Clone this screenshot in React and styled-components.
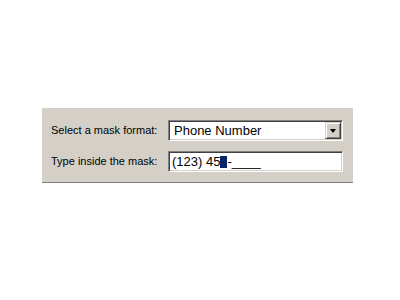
import React from 'react'
import styled, { createGlobalStyle } from 'styled-components'

const GlobalStyle = createGlobalStyle`
  html, body {
    margin: 0;
    padding: 0;
    background: #ffffff;
  }
  body {
    font-family: "Liberation Sans", Arial, sans-serif;
  }
`

const Page = styled.div`
  width: 400px;
  height: 300px;
  padding: 108px 0 0 42px;
  box-sizing: border-box;
`

const Panel = styled.div`
  width: 311px;
  box-sizing: border-box;
  background: #d4d0c8;
  border-bottom: 1px solid #808080;
  padding: 12px 10px 10px 9px;
  display: grid;
  grid-template-columns: 117px 175px;
  row-gap: 10px;
  align-items: center;
`

const Label = styled.label`
  font-size: 11px;
  color: #000000;
  line-height: 13px;
  white-space: nowrap;
`

const Sunken = styled.div`
  height: 21px;
  box-sizing: border-box;
  background: #ffffff;
  border: 1px solid;
  border-color: #808080 #ffffff #ffffff #808080;
  box-shadow: inset 1px 1px #404040, inset -1px -1px #d4d0c8;
  padding: 1px;
  display: flex;
  align-items: center;
  font-size: 13px;
  color: #000000;
  white-space: nowrap;
`

const ComboText = styled.span`
  flex: 1;
  padding-left: 4px;
  line-height: 17px;
`

const DropButton = styled.span`
  width: 16px;
  height: 17px;
  box-sizing: border-box;
  background: #d4d0c8;
  border: 1px solid;
  border-color: #d4d0c8 #404040 #404040 #d4d0c8;
  box-shadow: inset 1px 1px #ffffff, inset -1px -1px #808080;
  display: flex;
  align-items: center;
  justify-content: center;
`

const Arrow = styled.span`
  width: 0;
  height: 0;
  border-left: 3.5px solid transparent;
  border-right: 3.5px solid transparent;
  border-top: 4px solid #000000;
  margin-top: 1px;
`

const MaskText = styled.span`
  padding-left: 2px;
  line-height: 17px;
`

// the highlighted placeholder slot where the caret sits
const Selected = styled.span`
  display: inline-block;
  width: 7px;
  height: 12px;
  background: #0a246a;
  vertical-align: -2px;
`

export default function App() {
  return (
    <>
      <GlobalStyle />
      <Page>
        <Panel>
          <Label>Select a mask format:</Label>
          <Sunken>
            <ComboText>Phone Number</ComboText>
            <DropButton>
              <Arrow />
            </DropButton>
          </Sunken>
          <Label>Type inside the mask:</Label>
          <Sunken>
            <MaskText>
              (123) 45<Selected aria-label="_" />-____
            </MaskText>
          </Sunken>
        </Panel>
      </Page>
    </>
  )
}
